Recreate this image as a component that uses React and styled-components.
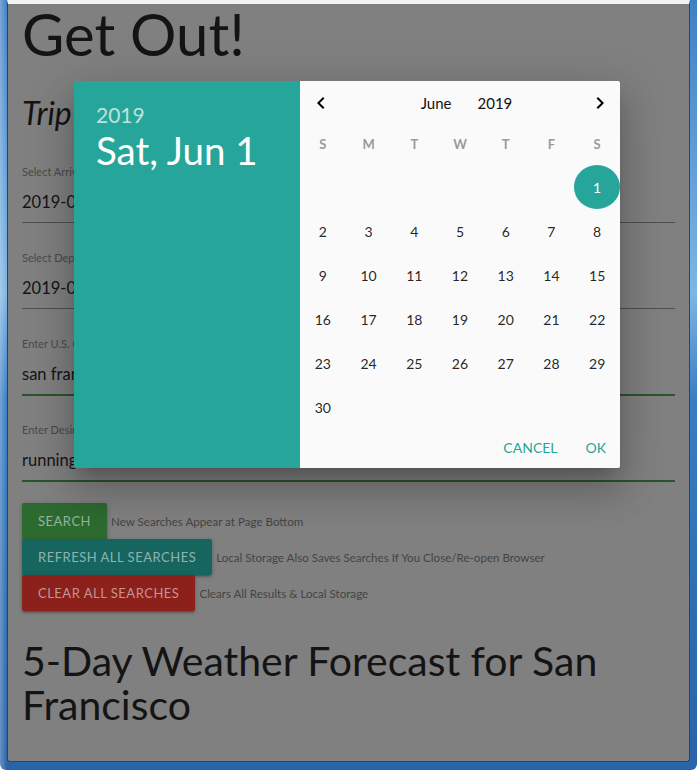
import React from "react";
import styled, { createGlobalStyle } from "styled-components";

const GlobalStyle = createGlobalStyle`
  html, body {
    margin: 0;
    padding: 0;
    width: 697px;
    height: 770px;
    overflow: hidden;
  }
  body {
    font-family: "Lato", "Open Sans", sans-serif;
  }
  * {
    box-sizing: border-box;
  }
`;

const TEAL = "#26a69a";

const Window = styled.div`
  width: 697px;
  height: 770px;
  display: flex;
  flex-direction: column;
  padding: 0 7px 8px 7px;
  border-radius: 0 0 6px 6px;
  background:
    linear-gradient(90deg, rgba(255, 255, 255, 0.3) 0, rgba(255, 255, 255, 0) 7px),
    linear-gradient(180deg, #3f7fc6 0%, #7db6e4 38%, #3a7cc4 52%, #2d6cb3 80%, #2a64a8 100%);
`;

const Viewport = styled.div`
  flex: 1;
  position: relative;
  overflow: hidden;
  background: #808080;
  border-top: 4px solid #f2f2f2;
  border-right: 1px solid #23456e;
  border-bottom: 1px solid #23456e;
  border-left: 1px solid #23456e;
  border-radius: 0 0 3px 3px;
`;

const Page = styled.div`
  padding: 0 14px;
  color: #141414;
`;

const Title = styled.h1`
  margin: 0;
  font-size: 58px;
  line-height: 60px;
  font-weight: 400;
`;

const Subtitle = styled.h4`
  margin: 29px 0 0;
  font-size: 32px;
  line-height: 40px;
  font-weight: 400;
  font-style: italic;
`;

const FieldList = styled.div`
  display: flex;
  flex-direction: column;
  gap: 28px;
  margin-top: 32px;
`;

const Field = styled.div`
  display: flex;
  flex-direction: column;
`;

const FieldLabel = styled.label`
  font-size: 11px;
  line-height: 14px;
  color: #4a4a4a;
  margin-bottom: 12px;
`;

const FieldValue = styled.div`
  font-size: 16.5px;
  line-height: 22px;
  padding-bottom: 9px;
  color: #141414;
  border-bottom: 1px solid ${(p) => (p.$valid ? "#2a542c" : "#4f4f4f")};
  box-shadow: ${(p) => (p.$valid ? "0 1px 0 0 #2a542c" : "none")};
`;

const ActionList = styled.div`
  display: flex;
  flex-direction: column;
  margin-top: 22px;
`;

const ActionRow = styled.div`
  display: flex;
  align-items: center;
  gap: 4px;
`;

const tones = {
  green: { bg: "#2d6a30", fg: "#98b399" },
  teal: { bg: "#16655f", fg: "#8fb3b0" },
  red: { bg: "#8c211c", fg: "#c49491" },
};

const ActionButton = styled.button`
  height: 36px;
  padding: 0 16px;
  border: none;
  border-radius: 2px;
  font-family: inherit;
  font-size: 13px;
  letter-spacing: 0.5px;
  text-transform: uppercase;
  background: ${(p) => tones[p.$tone].bg};
  color: ${(p) => tones[p.$tone].fg};
  box-shadow: 0 2px 2px 0 rgba(0, 0, 0, 0.14), 0 3px 1px -2px rgba(0, 0, 0, 0.12),
    0 1px 5px 0 rgba(0, 0, 0, 0.2);
`;

const Hint = styled.span`
  font-size: 11.6px;
  color: #444;
`;

const ForecastHeading = styled.h3`
  margin: 28px 0 0;
  font-size: 41px;
  line-height: 44px;
  font-weight: 400;
`;

const Modal = styled.div`
  position: absolute;
  left: 66px;
  top: 77px;
  width: 546px;
  height: 387px;
  display: flex;
  border-radius: 2px;
  overflow: hidden;
  box-shadow: 0 24px 38px 3px rgba(0, 0, 0, 0.14), 0 9px 46px 8px rgba(0, 0, 0, 0.12),
    0 11px 15px -7px rgba(0, 0, 0, 0.2);
`;

const DateDisplay = styled.div`
  width: 226px;
  background: ${TEAL};
  color: #fff;
  padding: 22px 22px;
`;

const DisplayYear = styled.div`
  font-size: 21px;
  line-height: 24px;
  color: rgba(255, 255, 255, 0.7);
`;

const DisplayDate = styled.div`
  margin-top: 1px;
  font-size: 38.5px;
  line-height: 44px;
`;

const Calendar = styled.div`
  flex: 1;
  background: #fafafa;
  padding-top: 8px;
  display: flex;
  flex-direction: column;
`;

const CalHeader = styled.div`
  height: 28px;
  display: flex;
  align-items: center;
  justify-content: space-between;
  padding: 0 8px 0 9px;
`;

const NavButton = styled.button`
  width: 24px;
  height: 24px;
  padding: 0;
  border: none;
  background: transparent;
  display: flex;
  align-items: center;
  justify-content: center;
`;

const MonthYear = styled.div`
  display: flex;
  gap: 26px;
  margin-left: 12px;
  font-size: 15px;
  color: #111;
`;

const Weekdays = styled.div`
  display: grid;
  grid-template-columns: repeat(7, 1fr);
  height: 30px;
  margin-top: 12px;
  align-items: center;
`;

const Weekday = styled.div`
  text-align: center;
  font-size: 13px;
  font-weight: 700;
  color: #9a9a9a;
`;

const DayGrid = styled.div`
  display: grid;
  grid-template-columns: repeat(7, 1fr);
  grid-auto-rows: 44px;
  margin-top: 6px;
`;

const DayCell = styled.div`
  display: flex;
  align-items: center;
  justify-content: center;
  font-size: 14px;
  border-radius: 50%;
  color: ${(p) => (p.$selected ? "#fff" : "rgba(0, 0, 0, 0.87)")};
  background: ${(p) => (p.$selected ? TEAL : "transparent")};
`;

const Footer = styled.div`
  height: 36px;
  display: flex;
  align-items: center;
  justify-content: flex-end;
  gap: 28px;
  padding-right: 14px;
`;

const FlatButton = styled.button`
  padding: 0;
  border: none;
  background: transparent;
  font-family: inherit;
  font-size: 14px;
  color: ${TEAL};
  text-transform: uppercase;
`;

const Chevron = ({ dir }) => (
  <svg width="24" height="24" viewBox="0 0 24 24">
    <path
      fill="#000"
      d={
        dir === "left"
          ? "M15.41 7.41L14 6l-6 6 6 6 1.41-1.41L10.83 12z"
          : "M8.59 16.59L10 18l6-6-6-6-1.41 1.41L13.17 12z"
      }
    />
  </svg>
);

const weekdays = ["S", "M", "T", "W", "T", "F", "S"];
const days = [...Array(6).fill(null), ...Array.from({ length: 30 }, (_, i) => i + 1)];

const fields = [
  { label: "Select Arrival Date", value: "2019-06-01" },
  { label: "Select Departure Date", value: "2019-06-05" },
  { label: "Enter U.S. City Name", value: "san francisco", valid: true },
  { label: "Enter Desired Activity", value: "running", valid: true },
];

const actions = [
  { tone: "green", label: "Search", hint: "New Searches Appear at Page Bottom" },
  {
    tone: "teal",
    label: "Refresh All Searches",
    hint: "Local Storage Also Saves Searches If You Close/Re-open Browser",
  },
  { tone: "red", label: "Clear All Searches", hint: "Clears All Results & Local Storage" },
];

export default function App() {
  return (
    <>
      <GlobalStyle />
      <Window>
        <Viewport>
          <Page>
            <Title>Get Out!</Title>
            <Subtitle>Trip Details</Subtitle>
            <FieldList>
              {fields.map((f) => (
                <Field key={f.label}>
                  <FieldLabel>{f.label}</FieldLabel>
                  <FieldValue $valid={f.valid}>{f.value}</FieldValue>
                </Field>
              ))}
            </FieldList>
            <ActionList>
              {actions.map((a) => (
                <ActionRow key={a.label}>
                  <ActionButton $tone={a.tone}>{a.label}</ActionButton>
                  <Hint>{a.hint}</Hint>
                </ActionRow>
              ))}
            </ActionList>
            <ForecastHeading>5-Day Weather Forecast for San Francisco</ForecastHeading>
          </Page>

          <Modal>
            <DateDisplay>
              <DisplayYear>2019</DisplayYear>
              <DisplayDate>Sat, Jun 1</DisplayDate>
            </DateDisplay>
            <Calendar>
              <CalHeader>
                <NavButton>
                  <Chevron dir="left" />
                </NavButton>
                <MonthYear>
                  <span>June</span>
                  <span>2019</span>
                </MonthYear>
                <NavButton>
                  <Chevron dir="right" />
                </NavButton>
              </CalHeader>
              <Weekdays>
                {weekdays.map((d, i) => (
                  <Weekday key={i}>{d}</Weekday>
                ))}
              </Weekdays>
              <DayGrid>
                {days.map((d, i) => (
                  <DayCell key={i} $selected={d === 1}>
                    {d}
                  </DayCell>
                ))}
              </DayGrid>
              <Footer>
                <FlatButton>Cancel</FlatButton>
                <FlatButton>Ok</FlatButton>
              </Footer>
            </Calendar>
          </Modal>
        </Viewport>
      </Window>
    </>
  );
}
